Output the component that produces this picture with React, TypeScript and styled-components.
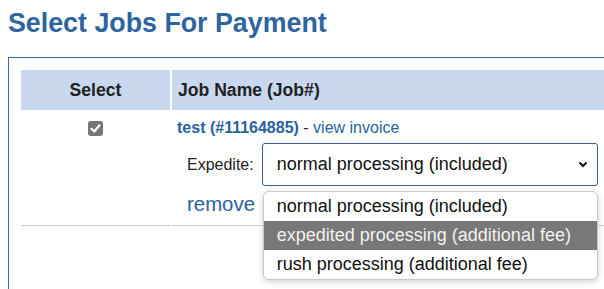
import React from "react";
import styled, { createGlobalStyle } from "styled-components";

const GlobalStyle = createGlobalStyle`
  html {
    overflow: hidden;
  }
  body {
    margin: 0;
    padding: 0;
    background: #fff;
    font-family: "Liberation Sans", Arial, sans-serif;
    color: #222;
  }
`;

const Page = styled.div`
  padding: 7px 0 0 8px;
`;

const Title = styled.h2`
  margin: 0 0 18px;
  font-size: 26.8px;
  line-height: 32px;
  font-weight: 700;
  color: #2e64a0;
`;

const Panel = styled.div`
  width: 760px;
  min-height: 300px;
  border: 1px solid #3a6ca3;
  padding: 10px;
`;

const Table = styled.table`
  width: 100%;
  border-spacing: 2px;
  border-collapse: separate;
`;

const HeadCell = styled.th<{ $align?: "left" | "center"; $width?: number }>`
  height: 40px;
  padding: 0 6px;
  background: #c9d8ef;
  font-size: 17.6px;
  font-weight: 700;
  color: #222;
  text-align: ${(p) => p.$align ?? "left"};
  width: ${(p) => (p.$width ? `${p.$width}px` : "auto")};
  box-sizing: border-box;
`;

const Cell = styled.td<{ $center?: boolean }>`
  vertical-align: top;
  border-bottom: 1px solid #cfcfcf;
  padding: ${(p) => (p.$center ? "8px 0 0" : "6px 5px 9px")};
  text-align: ${(p) => (p.$center ? "center" : "left")};
`;

const CheckBox = styled.span`
  display: inline-flex;
  align-items: center;
  justify-content: center;
  width: 15px;
  height: 15px;
  border-radius: 3px;
  background: #767676;
`;

const JobLine = styled.div`
  font-size: 16px;
  line-height: 20px;
  color: #222;
`;

const JobLink = styled.a<{ $bold?: boolean }>`
  color: #2a62a0;
  text-decoration: none;
  font-weight: ${(p) => (p.$bold ? 700 : 400)};
`;

const ExpediteRow = styled.div`
  display: flex;
  align-items: center;
  gap: 8px;
  margin: 5px 0 0 10px;
`;

const Label = styled.span`
  font-size: 16px;
  color: #222;
`;

const SelectWrap = styled.div`
  position: relative;
  width: 336px;
`;

const SelectBox = styled.div`
  display: flex;
  align-items: center;
  justify-content: space-between;
  box-sizing: border-box;
  height: 43px;
  padding: 0 9px 0 14px;
  border: 1px solid #3a5f8c;
  border-radius: 3px;
  font-size: 18px;
  color: #111;
  background: #fff;
`;

const Dropdown = styled.div`
  position: absolute;
  top: calc(100% + 5px);
  left: 1px;
  right: 0;
  z-index: 2;
  background: #fff;
  border: 1px solid #c8c8c8;
  border-radius: 6px;
  box-shadow: 0 2px 6px rgba(0, 0, 0, 0.18);
  overflow: hidden;
`;

const Option = styled.div<{ $active?: boolean }>`
  height: 29px;
  line-height: 29px;
  padding-left: 13px;
  font-size: 18px;
  color: ${(p) => (p.$active ? "#f2f2f2" : "#111")};
  background: ${(p) => (p.$active ? "#787878" : "transparent")};
`;

const RemoveLink = styled.a`
  display: block;
  margin: 6px 0 0 10px;
  font-size: 20.4px;
  line-height: 24px;
  color: #2a62a0;
  text-decoration: none;
`;

const options = [
  "normal processing (included)",
  "expedited processing (additional fee)",
  "rush processing (additional fee)",
];

export default function App() {
  return (
    <Page>
      <GlobalStyle />
      <Title>Select Jobs For Payment</Title>
      <Panel>
        <Table>
          <thead>
            <tr>
              <HeadCell $align="center" $width={149}>
                Select
              </HeadCell>
              <HeadCell>Job Name (Job#)</HeadCell>
            </tr>
          </thead>
          <tbody>
            <tr>
              <Cell $center>
                <CheckBox>
                  <svg width="11" height="11" viewBox="0 0 11 11">
                    <polyline
                      points="1.5,5.8 4.3,8.5 9.5,2.3"
                      fill="none"
                      stroke="#fff"
                      strokeWidth="2.2"
                      strokeLinecap="round"
                      strokeLinejoin="round"
                    />
                  </svg>
                </CheckBox>
              </Cell>
              <Cell>
                <JobLine>
                  <JobLink $bold>test (#11164885)</JobLink> -{" "}
                  <JobLink>view invoice</JobLink>
                </JobLine>
                <ExpediteRow>
                  <Label>Expedite:</Label>
                  <SelectWrap>
                    <SelectBox>
                      <span>{options[0]}</span>
                      <svg width="10" height="7" viewBox="0 0 10 7">
                        <polyline
                          points="1.5,1.5 5,5 8.5,1.5"
                          fill="none"
                          stroke="#111"
                          strokeWidth="2"
                        />
                      </svg>
                    </SelectBox>
                    <Dropdown>
                      {options.map((o, i) => (
                        <Option key={o} $active={i === 1}>
                          {o}
                        </Option>
                      ))}
                    </Dropdown>
                  </SelectWrap>
                </ExpediteRow>
                <RemoveLink>remove</RemoveLink>
              </Cell>
            </tr>
          </tbody>
        </Table>
      </Panel>
    </Page>
  );
}
